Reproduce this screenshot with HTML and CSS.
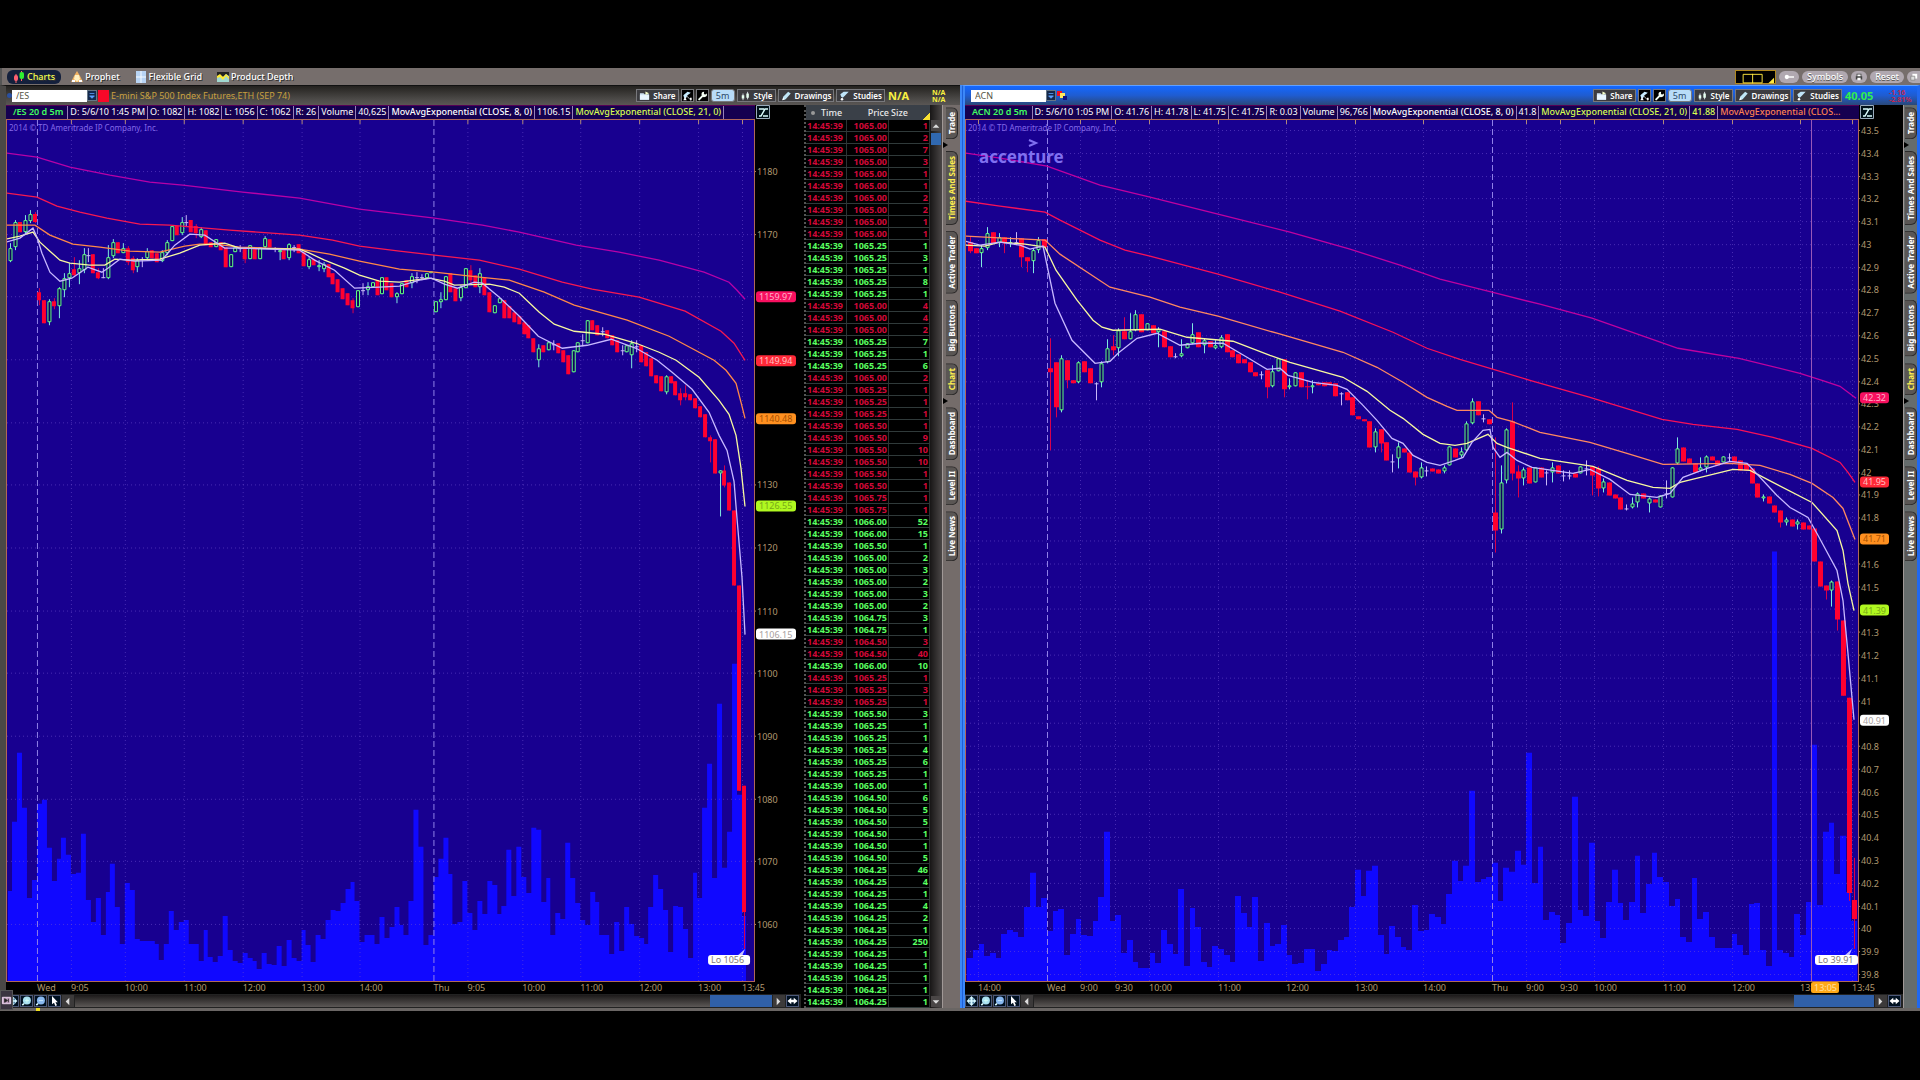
FILE: index.html
```html
<!DOCTYPE html>
<html lang="en">
<head>
<meta charset="utf-8">
<title>Charts</title>
<link rel="stylesheet" href="styles.css">
</head>
<body>
<svg class="defs" aria-hidden="true">
  <symbol id="i-share" viewBox="0 0 12 10"><path d="M1 2h4l1 1h5v6H1z" fill="#cfe4f4"/><path d="M1 4h10v5H1z" fill="#e8f6ff"/><path d="M7 0l4 2-4 2z" fill="#f4ffc8"/></symbol>
  <symbol id="i-flask" viewBox="0 0 12 12"><path d="M1 5l5-4 4 1-4 3-2 4-2-1z" fill="#c8ecff"/><path d="M1 11l2-4 2 4zM9 8h2v3H9z" fill="#fff"/><path d="M5 6l5 5" stroke="#ddd"/></symbol>
  <symbol id="i-wrench" viewBox="0 0 12 12"><path d="M2 10l5-5" stroke="#f4fff4" stroke-width="2.4" stroke-linecap="round"/><path d="M11 3a3.2 3.2 0 1 1-3-2L7.600 3 9 4.400z" fill="#f4fff4"/></symbol>
  <symbol id="i-candles" viewBox="0 0 12 12"><path d="M3 3v8M8.500 1v9" stroke="#eef"/><path d="M1.500 5h3v4h-3zM7 3h3v5H7z" fill="#e6fff0"/></symbol>
  <symbol id="i-pencil" viewBox="0 0 12 12"><path d="M1 11l1-4 6-6 3 2-6 7z" fill="#bfe6f6"/><path d="M1 11l1-3 2 2z" fill="#fff"/></symbol>
  <symbol id="i-studies" viewBox="0 0 12 12"><path d="M1 4l4-3h6L7 5 4 8 2 7z" fill="#bfe4f8"/><circle cx="3" cy="10" r="1.500" fill="#fff"/></symbol>
  <symbol id="i-fit" viewBox="0 0 14 14"><path d="M.5.5h13v13H.5z" fill="#001018" stroke="#9ab"/><path d="M3 11h2l4-7h3M3 4h5M7 11h5" stroke="#dff" stroke-width="1.500" fill="none"/></symbol>
  <symbol id="i-pan" viewBox="0 0 12 12"><circle cx="6" cy="6" r="4.500" fill="#5888a8"/><path d="M6 0l2.500 3H7v2h2V3.500L12 6 9 8.500V7H7v2h1.500L6 12 3.500 9H5V7H3v1.500L0 6l3-2.500V5h2V3H3.500z" fill="#d8f8ff"/></symbol>
  <symbol id="i-zin" viewBox="0 0 12 12"><circle cx="6.500" cy="5.500" r="4.800" fill="#a8e0f0"/><path d="M1 11l2-2" stroke="#dff" stroke-width="2"/><path d="M4 5.500h5M6.500 3v5" stroke="#d8fff4"/></symbol>
  <symbol id="i-zout" viewBox="0 0 12 12"><circle cx="6.500" cy="5.500" r="4.800" fill="#88b8f0"/><path d="M1 11l2-2" stroke="#dff" stroke-width="2"/><path d="M4 5.500h5" stroke="#d0f0ff"/></symbol>
  <symbol id="i-ptr" viewBox="0 0 12 12"><path d="M3 0v10l2.400-2L7 12l2-1-1.800-3.500H10z" fill="#fff"/></symbol>
  <symbol id="i-lr" viewBox="0 0 12 12"><path d="M0 6l4.500-4v2.500h3V2L12 6 7.500 10V7.500h-3V10z" fill="#fff"/></symbol>
  <symbol id="i-left" viewBox="0 0 12 12"><path d="M8 2v8L4 6z" fill="#ddd"/></symbol>
  <symbol id="i-right" viewBox="0 0 12 12"><path d="M4 2v8l4-4z" fill="#ddd"/></symbol>
  <symbol id="i-up" viewBox="0 0 12 12"><path d="M2 8h8L6 4z" fill="#ddd"/></symbol>
  <symbol id="i-down" viewBox="0 0 12 12"><path d="M2 4h8L6 8z" fill="#ddd"/></symbol>
  <symbol id="i-drop" viewBox="0 0 10 11"><path d="M2 3h6M2 6h6L5 9z" stroke="#5aa0ff" fill="#5aa0ff"/></symbol>
</svg>

<div class="app">
  <header class="topbar">
    <nav class="views">
      <button class="view on"><svg viewBox="0 0 12 12"><path d="M3 3v9M8.500 0v10" stroke="#f66"/><rect x="1" y="4" width="4" height="6" rx="2" fill="#ff6070"/><rect x="6.500" y="1" width="4.500" height="7" rx="2" fill="#30f030"/></svg>Charts</button>
      <button class="view"><svg viewBox="0 0 12 12"><path d="M6 0l3 5 3 6H0l3-6z" fill="#f0b060"/><path d="M4 4h4l1 4-3 3-3-3z" fill="#fff0c0"/><path d="M1 9h3v2H1zM8 9h3v2H8z" fill="#fff"/></svg>Prophet</button>
      <button class="view"><svg viewBox="0 0 12 12"><path d="M1 0h10v12H1z" fill="#b8d4f4"/><path d="M6 0v12M1 6h10" stroke="#f4faff"/></svg>Flexible Grid</button>
      <button class="view"><svg viewBox="0 0 12 12"><path d="M0 1h12v10H0z" fill="#a0d8d0"/><path d="M0 1h12v4L9 3 6 6 3 4 0 6z" fill="#222"/><path d="M0 5l3-2 3 3 3-3 3 3v2L9 5 6 9 3 6 0 7z" fill="#ffe830"/></svg>Product Depth</button>
    </nav>
    <div class="tools">
      <button class="gridbtn" aria-label="Grid layout"><svg viewBox="0 0 41 14"><path d="M7.500 3.500h20v9h-20zM17.500 3v10" stroke="#ffe840" fill="none"/><path d="M40 7v6h-6z" fill="#ffe840"/></svg></button>
      <button class="pill" aria-label="Key"><svg viewBox="0 0 14 8"><circle cx="4" cy="4" r="3" fill="#fff"/><path d="M6 4h8" stroke="#fff" stroke-width="2"/></svg></button>
      <button class="pill">Symbols</button>
      <button class="pill round" aria-label="Print"><svg viewBox="0 0 10 10"><path d="M2 1h6v3h1v4H1V4h1z" fill="#444"/><path d="M3 2h4v2H3zM3 6h4v3H3z" fill="#fff"/></svg></button>
      <button class="pill">Reset</button>
      <button class="pill last" aria-label="Copy"><svg viewBox="0 0 10 10"><path d="M3 1h6v6H3z" fill="#fff"/><path d="M1 4h5v5H1z" fill="#ddd" stroke="#888"/></svg></button>
    </div>
  </header>

  <main class="panels">
    <section class="panel">
      <div class="toolbar">
        <i class="grip"></i>
        <input class="symbol" aria-label="Symbol" value="/ES">
        <button class="drop" aria-label="Symbol list"><svg><use href="#i-drop"/></svg></button>
        <i class="link"></i>
        <span class="desc">E-mini S&amp;P 500 Index Futures,ETH (SEP 74)</span>
        <div class="acts">
          <button class="act"><svg><use href="#i-share"/></svg>Share</button>
          <button class="act sq" aria-label="Flask"><svg><use href="#i-flask"/></svg></button>
          <button class="act sq" aria-label="Settings"><svg><use href="#i-wrench"/></svg></button>
          <button class="act time">5m</button>
          <button class="act"><svg><use href="#i-candles"/></svg>Style</button>
          <button class="act"><svg><use href="#i-pencil"/></svg>Drawings</button>
          <button class="act"><svg><use href="#i-studies"/></svg>Studies</button>
        </div>
        <b class="last-price na">N/A</b>
        <b class="change na">N/A<br>N/A</b>
      </div>
      <div class="body">
        <div class="chart" id="es">
          <div class="info">
            <b class="sym">/ES 20 d 5m</b><span>D: 5/6/10 1:45 PM</span><span>O: 1082</span><span>H: 1082</span><span>L: 1056</span><span>C: 1062</span><span>R: 26</span><span>Volume</span><span>40,625</span><b>MovAvgExponential (CLOSE, 8, 0)</b><span>1106.15</span><b class="lime">MovAvgExponential (CLOSE, 21, 0)</b>
          </div>
          <button class="fit" aria-label="Fit"><svg><use href="#i-fit"/></svg></button>
          <div class="plot"><svg class="canvas"></svg><svg class="notes"></svg></div>
          <svg class="prices"></svg>
          <svg class="times"></svg>
          <div class="scroll">
            <button class="tl" aria-label="Pan"><svg><use href="#i-pan"/></svg></button>
            <button class="tl" aria-label="Zoom in"><svg><use href="#i-zin"/></svg></button>
            <button class="tl" aria-label="Zoom out"><svg><use href="#i-zout"/></svg></button>
            <button class="tl" aria-label="Pointer"><svg><use href="#i-ptr"/></svg></button>
            <button class="ar" aria-label="Scroll left"><svg><use href="#i-left"/></svg></button>
            <div class="track"><div class="thumb"></div></div>
            <button class="ar" aria-label="Scroll right"><svg><use href="#i-right"/></svg></button>
            <button class="tl" aria-label="Expand"><svg><use href="#i-lr"/></svg></button>
            <button class="flyout" aria-label="Open side panel"><svg viewBox="0 0 12 12"><path d="M1.500 2.500h9v7h-9z" fill="#c8a8c8" stroke="#f0d8f0"/><path d="M4 4v4l3-2zM8 4v4" fill="#222" stroke="#222"/></svg></button>
          </div>
        </div>
        <div class="divider"></div>
        <table class="sales">
          <thead><tr><th><i></i>Time</th><th>Price</th><th>Size</th></tr></thead>
          <tbody id="sales"></tbody>
        </table>
        <div class="vscroll">
          <button aria-label="Scroll up"><svg><use href="#i-up"/></svg></button>
          <div class="vthumb"></div>
          <button class="dn" aria-label="Scroll down"><svg><use href="#i-down"/></svg></button>
        </div>
        <nav class="rail">
          <button>Trade</button><i></i><button class="on">Times And Sales</button><button>Active Trader</button><button>Big Buttons</button><button class="on">Chart</button><i></i><button>Dashboard</button><button>Level II</button><button>Live News</button>
        </nav>
      </div>
    </section>

    <section class="panel active">
      <div class="toolbar">
        <i class="grip"></i>
        <input class="symbol" aria-label="Symbol" value="ACN">
        <button class="drop" aria-label="Symbol list"><svg><use href="#i-drop"/></svg></button>
        <svg class="links" viewBox="0 0 11 11"><path d="M0 1h5v5H0z" fill="#f01020"/><path d="M3 3h5v5H3z" fill="#ffe860"/><path d="M6 6h4v4H6z" fill="#101080"/></svg>
        <div class="acts">
          <button class="act"><svg><use href="#i-share"/></svg>Share</button>
          <button class="act sq" aria-label="Flask"><svg><use href="#i-flask"/></svg></button>
          <button class="act sq" aria-label="Settings"><svg><use href="#i-wrench"/></svg></button>
          <button class="act time">5m</button>
          <button class="act"><svg><use href="#i-candles"/></svg>Style</button>
          <button class="act"><svg><use href="#i-pencil"/></svg>Drawings</button>
          <button class="act"><svg><use href="#i-studies"/></svg>Studies</button>
        </div>
        <b class="last-price">40.05</b>
        <b class="change">-1.16<br>-2.81%</b>
      </div>
      <div class="body">
        <div class="chart" id="acn">
          <div class="info">
            <b class="sym">ACN 20 d 5m</b><span>D: 5/6/10 1:05 PM</span><span>O: 41.76</span><span>H: 41.78</span><span>L: 41.75</span><span>C: 41.75</span><span>R: 0.03</span><span>Volume</span><span>96,766</span><b>MovAvgExponential (CLOSE, 8, 0)</b><span>41.8</span><b class="lime">MovAvgExponential (CLOSE, 21, 0)</b><b class="lime">41.88</b><b class="orange">MovAvgExponential (CLOS...</b>
          </div>
          <button class="fit" aria-label="Fit"><svg><use href="#i-fit"/></svg></button>
          <div class="plot"><svg class="canvas"></svg><svg class="notes"></svg></div>
          <svg class="prices"></svg>
          <svg class="times"></svg>
          <div class="scroll">
            <button class="tl" aria-label="Pan"><svg><use href="#i-pan"/></svg></button>
            <button class="tl" aria-label="Zoom in"><svg><use href="#i-zin"/></svg></button>
            <button class="tl" aria-label="Zoom out"><svg><use href="#i-zout"/></svg></button>
            <button class="tl" aria-label="Pointer"><svg><use href="#i-ptr"/></svg></button>
            <button class="ar" aria-label="Scroll left"><svg><use href="#i-left"/></svg></button>
            <div class="track"><div class="thumb wide"></div></div>
            <button class="ar" aria-label="Scroll right"><svg><use href="#i-right"/></svg></button>
            <button class="tl" aria-label="Expand"><svg><use href="#i-lr"/></svg></button>
          </div>
        </div>
        <nav class="rail">
          <button>Trade</button><i></i><button>Times And Sales</button><button>Active Trader</button><button>Big Buttons</button><button class="on">Chart</button><i></i><button>Dashboard</button><button>Level II</button><button>Live News</button>
        </nav>
      </div>
    </section>
  </main>
  <footer class="foot"><i></i></footer>
</div>
<script src="charts.js"></script>
</body>
</html>
```
FILE: styles.css
```css
* { box-sizing: border-box; }
body {
  margin: 0;
  padding: 68px 0;
  background: #000;
  color: #fff;
  font: 9px/11px "Noto Sans", "Open Sans", sans-serif;
}
button { font: inherit; color: inherit; border: 0; margin: 0; padding: 0; background: none; }
i { font-style: normal; }
svg { display: block; }
.defs { position: absolute; width: 0; height: 0; }

.topbar { display: flex; justify-content: space-between; height: 17px; background: #766e6c; border-left: 2px solid #555; }
.views { display: flex; align-items: center; padding-left: 5px; gap: 5px; }
.view { display: flex; align-items: center; gap: 2px; height: 14px; padding: 0 5px; font-weight: 500; text-shadow: 1px 1px #333; }
.view svg { width: 12px; height: 12px; }
.view.on { background: #14203c; border-radius: 6px; color: #f4ff50; padding: 0 6px; }
.tools { display: flex; align-items: center; gap: 3px; }
.gridbtn { width: 41px; height: 14px; background: #000; border: 1px solid #b08820; }
.pill { display: flex; align-items: center; height: 12px; padding: 0 5px; border-radius: 6px; background: #b0a8b0; font-weight: 500; text-shadow: 0 1px #555; }
.pill svg { width: 10px; height: 8px; }
.pill.round { padding: 0 3px; }
.pill.last { border-radius: 6px 0 0 6px; padding: 0 1px 0 2px; }

.panels { display: grid; grid-template-columns: 1fr 1fr; }
.panel { display: flex; flex-direction: column; min-width: 0; background: #3c3a38; border-left: 6px solid #4a4846; border-top: 1px solid #111; }
.panel.active { background: #1f60d8; border: 1px solid #60a0ff; border-left: 5px double #3c88f8; border-right: 3px solid #2068f0; border-bottom: 0; }
.toolbar { display: flex; align-items: center; height: 19px; padding-left: 1px; background: linear-gradient(#24221f, #4c4a48 70%, #5a5654); }
.active .toolbar { padding-left: 1px; background: linear-gradient(#1468ff, #1f5cd0 50%, #2a4878); }
.grip { width: 5px; height: 5px; border-radius: 3px; background: #2a50a0; }
.active .grip { background: none; }
.symbol { width: 75px; height: 12px; border: 0; padding: 0 4px; background: #fff; color: #554; font: inherit; }
.drop { width: 10px; height: 11px; background: #14284c; border: 1px solid #678; }
.drop svg { width: 8px; height: 9px; }
.link { width: 11px; height: 12px; margin: 0 2px 0 1px; background: #f80828; }
.links { width: 11px; height: 11px; margin-left: 1px; }
.desc { color: #c8a040; }
.acts { display: flex; gap: 2px; margin-left: auto; }
.act { display: flex; align-items: center; gap: 3px; height: 13px; padding: 0 2px; background: #3c3c40; border: 1px solid #78787c; font-size: 8px; font-weight: 600; }
.act svg { width: 11px; height: 10px; }
.act.sq { width: 13px; background: #000; padding: 0; justify-content: center; }
.act.time { width: 24px; justify-content: center; border-radius: 3px; background: #b8dcf8; color: #2a4868; font-size: 9px; font-weight: 400; }
.last-price { width: 47px; padding-left: 3px; font-size: 11px; color: #30f050; }
.change { width: 28px; font-size: 7px; line-height: 7px; color: #c02850; }
.na { color: #f8f040; }

.body { display: flex; flex: 1; background: #000; }
.chart { flex: 1; min-width: 0; display: grid; grid-template-columns: minmax(0, 1fr) 46px; grid-template-rows: 14px minmax(0, 1fr) 12px 14px; background: #000; }
.active .chart { grid-template-columns: minmax(0, 1fr) 44px; }
.info { display: flex; background: #150050; line-height: 12px; white-space: nowrap; overflow: hidden; border-top: 1px solid #505; }
.info > * { padding: 0 2px; border-right: 1px solid #9880b8; }
.info b { font-weight: 500; }
.info .sym { padding: 0 4px 0 7px; color: #40ff60; font-weight: 600; }
.info .lime { color: #d8ff50; }
.info .orange { color: #ff8050; border: 0; }
.fit { padding-left: 1px; }
.fit svg { width: 14px; height: 14px; }
.plot { position: relative; background: #180090; border: 1px solid #b06858; }
.plot svg { position: absolute; left: 0; top: 0; width: 100%; height: 100%; }
.notes { overflow: visible; }
.notes text { fill: #8468e8; font-size: 8px; }
.notes .brand { font: 700 17px "Noto Sans", sans-serif; fill: #8070f0; }
.notes .low text { fill: #807878; font-size: 9px; }
.prices, .times { width: 100%; height: 100%; overflow: visible; }
.prices { height: calc(100% - 2px); margin: 1px 0; }
.times { width: calc(100% - 2px); margin: 0 1px; z-index: 1; }
.prices text, .times text { fill: #b09870; }
.prices .tag text { fill: inherit; }
.canvas path { fill: none; vector-effect: non-scaling-stroke; }
.canvas path.vol { fill: #1008ff; }
.canvas path.up { fill: #100060; stroke: #60ff80; }
.canvas path.down { fill: #ff0030; }
.canvas path.wd { stroke: #d8004c; }
.canvas path.wu { stroke: #80e8e0; }
.canvas path.doji { stroke: #c8b8f8; }

.scroll { position: relative; grid-column: 1 / -1; display: flex; align-items: stretch; gap: 1px; padding: 1px 2px 1px 0; background: #222; }
.scroll svg { width: 11px; height: 11px; }
.tl { width: 13px; background: #001020; border: 1px solid #4c5878; }
.tl svg { width: 11px; height: 10px; }
.ar { width: 12px; background: #3c3a3a; }
.flyout { position: absolute; left: -6px; bottom: -2px; width: 13px; height: 20px; background: #3a3440; border: 1px solid #555; }
.track { flex: 1; display: flex; justify-content: flex-end; background: linear-gradient(#1c1a1a, #5c5856); }
.thumb { width: 62px; background: #3060a8; }
.thumb.wide { width: 80px; }
.divider { width: 5px; background: #000; border-right: 2px dotted #555; border-left: 1px solid #000; }

.sales { width: 124px; border-spacing: 0; table-layout: fixed; font-weight: 700; align-self: flex-start; }
.sales th { height: 15px; padding: 0; background: #3a4048; color: #e8e8e8; font-weight: 500; line-height: 14px; }
.sales th:nth-child(1) { width: 41px; }
.sales th:nth-child(2) { width: 42px; text-align: right; }
.sales th:nth-child(3) { text-align: left; padding-left: 2px; background: linear-gradient(135deg, #3a4048 86%, #f8e030 86%); }
.sales th i { display: inline-block; width: 4px; height: 4px; margin-right: 6px; border-radius: 2px; background: #999; vertical-align: middle; }
.sales td { height: 12px; padding: 0 1px; line-height: 11px; border-bottom: 1px solid #303a3a; border-right: 1px solid #2c3434; text-align: right; }
.sales td:first-child { text-align: left; }
.sales .b { color: #58ff60; }
.sales .s { color: #d00838; }
.vscroll { display: flex; flex-direction: column; width: 12px; padding: 15px 1px 1px; background: linear-gradient(90deg, #181616, #4a4646); }
.vscroll button { width: 10px; height: 11px; background: #4a4646; }
.vscroll svg { width: 10px; height: 10px; }
.vthumb { height: 12px; margin-top: 2px; background: #3068b0; }
.vscroll .dn { margin-top: auto; }
.rail { display: flex; flex-direction: column; align-items: flex-end; gap: 6px; width: 18px; padding: 2px 2px 0 0; background: #746c6a; border-left: 1px solid #a09896; }
.active .rail { width: 14px; padding-right: 0; background: #666c6c; }
.rail button { writing-mode: vertical-rl; transform: rotate(180deg); width: 12px; padding: 4px 0; font-size: 8px; line-height: 11px; font-weight: 700; background: #5a5654; border: 1px solid #2c2a2a; border-right: 0; border-radius: 6px 0 0 6px; }
.rail .on { color: #fff050; }
.rail > i { align-self: flex-start; width: 0; height: 0; margin: -3px 0; border: 3px solid transparent; border-left: 5px solid #000; }

.foot { height: 3px; background: #6a6664; }
.foot i { display: block; width: 4px; height: 3px; margin-left: 36px; background: #f0e020; }
```
FILE: charts.js
```js
// Each candle: direction (r down, g up, w doji), body top, body bottom, then optional high and low.
const ES = {
  view: [7, 120, 748, 860], x0: 10, step: 4.9, body: 4,
  grid: { v: [71, 125, 184, 243, 302, 360, 468, 523, 581, 640, 699, 743], dash: [37, 434] },
  times: [[37, 'Wed'], [71, '9:05'], [125, '10:00'], [184, '11:00'], [243, '12:00'], [302, '13:00'], [360, '14:00'], [434, 'Thu'], [468, '9:05'], [523, '10:00'], [581, '11:00'], [640, '12:00'], [699, '13:00'], [743, '13:45']],
  price: { top: 1180, y: 171, step: 10, gap: 62.67, n: 13, digits: 0, skip: [1160, 1150, 1140] },
  tags: [[296, '1159.97', '#f81060', '#ffb0c8'], [360, '1149.94', '#ff2838', '#ffc0c0'], [418, '1140.48', '#ff9020', '#a85000'], [505, '1126.55', '#b0f820', '#78a818'], [633, '1106.15', '#fff', '#a8a0a0']],
  low: [709, 954, 42, 'Lo 1056'],
  vol: '90 159 228 173 83 101 177 181 133 100 122 143 126 107 108 147 81 59 83 46 89 117 74 37 98 91 42 40 40 40 37 21 37 70 51 59 61 37 37 20 51 24 19 25 65 31 20 18 28 23 20 12 28 17 16 35 15 41 23 20 51 36 19 46 42 61 71 70 78 92 99 80 39 46 46 37 64 43 54 74 56 46 80 171 134 36 46 104 122 143 107 57 59 100 68 51 80 67 100 96 67 75 131 85 134 104 88 153 151 79 103 46 68 62 138 103 78 61 56 89 79 46 46 27 59 30 74 57 45 43 37 74 106 92 71 29 75 74 52 23 108 83 173 217 103 277 113 149 317 186 65',
  candles: 'g 248 261 243 262|g 222 247 220 250|r 222 232|g 220 232 215 233|g 214 221 210 223|r 214 222 212 223|r 292 300 288 305|r 300 323|g 301 322 299 325|r 301 306 298 309|g 288 306 287 318|g 278 290 273 297|g 273 278 263 287|r 269 275 257 277|g 268 273 260 284|g 254 270 248 273|w 255 255 248 262|r 254 273|r 272 278 268 279|w 277 277 268 278|g 257 278 245 279|g 242 256 239 258|r 242 253|g 248 253 243 253|r 248 262 246 265|r 258 270 256 273|g 260 267 258 272|w 259 259 257 267|g 251 258 248 260|r 250 258|r 253 262|g 252 261 250 262|g 242 253 240 255|g 226 241|r 226 235|g 222 233 217 235|w 222 222 215 227|r 220 232|r 226 233 224 238|g 229 237 227 238|r 230 245|r 242 247|g 239 247|r 242 250|r 247 267|g 254 267|g 247 252|w 248 248 245 252|r 248 259 247 263|g 245 259|r 247 259|g 247 259|g 238 247 236 248|r 239 247|w 248 248 247 252|g 250 252 248 260|r 250 259|g 244 258 243 260|w 247 247 245 252|r 244 253|r 252 266|g 259 267 257 269|r 259 265|g 265 267 260 271|g 264 269 262 272|r 264 277|r 273 284|r 279 292|r 288 299|r 293 305|r 300 308 298 313|g 290 307|w 290 290 283 295|g 286 290 282 295|g 282 287|r 280 295|g 277 294|r 277 290|r 283 297|g 293 297 292 303|g 283 294|r 280 287|g 276 283 273 288|w 277 277 272 283|w 277 277 274 280|g 273 278|g 271 273|g 301 312|g 299 302 292 308|g 276 300|r 273 292|r 288 301|g 287 298 285 301|g 268 288|r 270 280 265 284|r 275 287|g 273 287 268 293|r 277 295|r 292 312|g 305 313|g 298 303|r 300 318|r 306 318|r 312 322|r 316 324|r 322 334|r 325 338|r 338 352|g 348 360 344 367|r 345 352|g 342 350|w 344 344 340 350|r 343 353|r 350 362|r 355 374|g 350 372|g 342 352|w 340 340 334 346|g 320 343|r 320 330|r 325 335|w 331 331 327 336|r 330 338|r 335 345|r 340 352|w 350 350 345 355|g 345 352|g 343 355 340 368|w 346 346 340 352|r 345 362|r 352 366|r 358 376|r 375 383|r 376 391|g 376 392 375 394|r 376 383|r 381 395|r 393 400 388 405|r 393 397 385 400|r 394 400|r 398 408|r 406 417|r 414 437|r 437 441 435 462|r 439 473|g 470 473 470 516|r 470 485 465 487|r 482 510|r 510 585|r 585 790|r 785 911 785 948',
  lines: [
    ['#b800a8', '6,153 37,157 70,167 110,175 150,182 183,185 243,192 300,198 360,209 435,218 483,225 520,232 577,245 620,252 660,260 705,272 730,282 738,290 746,299'],
    ['#f81850', '6,193 37,197 57,206 80,212 107,218 140,224 170,225 230,230 300,235 333,240 360,246 400,251 435,255 480,260 520,269 563,282 593,289 640,297 686,311 722,331 735,343 746,360'],
    ['#ff8848', '6,225 35,225 50,235 73,244 100,247 130,251 160,252 185,246 200,244 215,244 240,247 300,249 330,254 360,261 400,269 435,272 480,277 510,280 545,292 575,305 628,320 670,336 715,360 727,370 737,383 742,402 746,418'],
    ['#f8f8a0', '6,239 20,236 33,232 40,242 50,251 60,260 70,263 90,265 105,265 115,259 130,260 160,259 180,253 200,245 225,243 240,248 300,249 310,253 325,260 345,268 360,275 380,281 400,282 430,278 445,281 455,285 490,284 505,287 520,293 540,312 555,324 575,331 605,334 637,343 660,352 677,360 700,377 720,400 730,414 737,435 742,468 746,506'],
    ['#c8b8ff', '6,242 20,238 33,228 37,237 42,253 50,272 60,281 72,278 88,267 102,272 108,268 120,259 135,261 162,260 175,245 190,234 205,235 225,248 240,248 300,250 315,260 335,270 355,288 380,287 400,286 420,280 432,278 445,284 458,288 475,282 483,283 500,297 520,316 539,336 563,348 588,345 612,339 637,348 658,360 673,372 693,389 710,412 720,435 728,450 735,481 738,518 743,577 746,634']
  ]
};
const ACN = {
  view: [966, 120, 892, 860], x0: 970, step: 5.705, body: 5,
  grid: { v: [978, 1080, 1115, 1149, 1218, 1286, 1355, 1423, 1526, 1560, 1594, 1663, 1732, 1800, 1852], dash: [1047, 1492], cross: 1811 },
  times: [[978, '14:00'], [1047, 'Wed'], [1080, '9:00'], [1115, '9:30'], [1149, '10:00'], [1218, '11:00'], [1286, '12:00'], [1355, '13:00'], [1423, '14:00'], [1492, 'Thu'], [1526, '9:00'], [1560, '9:30'], [1594, '10:00'], [1663, '11:00'], [1732, '12:00'], [1800, '13:00'], [1852, '13:45']],
  price: { top: 43.5, y: 130, step: 0.1, gap: 22.78, n: 38, digits: 1, skip: [41.7, 41.4, 40.9] },
  tags: [[397, '42.32', '#f81060', '#ffb0c8'], [481, '41.95', '#ff2838', '#ffc0c0'], [538, '41.71', '#ff9020', '#a85000'], [609, '41.39', '#b0f820', '#78a818'], [719, '40.91', '#fff', '#a8a0a0']],
  low: [1815, 954, 43, 'Lo 39.91'],
  vol: '23 31 37 25 28 23 47 51 49 44 74 108 74 83 50 70 72 26 47 62 46 45 60 84 149 60 66 28 41 19 13 13 28 18 51 37 27 92 15 73 54 19 14 35 32 26 19 85 68 54 84 20 58 35 37 56 26 17 18 32 32 10 17 31 30 41 44 74 111 85 110 115 46 27 55 44 34 31 76 50 51 67 64 57 87 120 100 115 190 99 102 104 118 80 113 109 130 116 228 98 134 61 69 66 38 58 184 71 65 138 60 43 79 111 78 61 79 125 68 97 128 104 99 75 82 44 39 103 62 69 44 33 33 33 47 36 26 77 78 31 15 429 31 28 24 67 46 79 236 76 149 158 107 145 89 60',
  candles: 'r 242 251 237 253|r 248 253|g 248 253 245 267|g 233 248 227 250|r 232 243|g 237 243 233 247|r 237 243 237 253|g 242 244 237 247|w 242 242 232 245|r 238 257 238 267|r 257 261 257 272|g 250 261 248 273|g 240 250 237 253|r 239 247|r 368 372 338 450|r 362 407 362 417|g 358 410 355 412|r 360 380 360 388|r 380 383|g 362 382 361 383|r 361 372|r 368 383|w 383 383 382 400|g 363 382 361 387|g 348 362 339 363|r 346 350 335 355|g 330 348 328 356|r 331 339 317 339|g 331 339 313 339|g 314 330 310 331|r 314 332|g 323 330|r 325 333|g 329 332 327 347|r 331 347|r 346 357|w 356 356 353 358|g 353 356 339 357|g 343 348|g 334 343 323 344|r 332 347|g 340 345 338 353|r 341 347|g 345 348 340 349|g 337 347 335 348|r 334 352|r 350 357|r 354 363|r 359 363|r 362 372|r 372 376|w 374 374 371 379|r 370 387 370 398|g 371 386 365 387|g 358 371|r 359 389 359 397|g 385 387 378 389|g 372 386|r 372 387|r 386 387 380 399|g 385 387 380 393|r 383 385|r 382 386|r 382 385|r 383 396|w 393 393 392 405|r 392 400|r 397 415|r 416 419|r 419 421|r 421 447|g 431 447 428 452|r 429 443 429 452|r 442 460|w 461 461 454 472|g 446 458 442 468|r 448 452|r 452 472|r 471 477 471 485|g 467 477 462 478|w 470 470 466 476|r 468 471|r 469 473|g 467 471 465 473|g 446 465|r 448 457|g 451 455 447 457|g 423 450 421 451|g 401 423 398 424|r 401 415|w 418 418 414 422|r 419 424|r 512 530 437 552|g 482 529 465 533|g 429 480 428 483|r 421 473 402 480|r 471 478 465 497|g 469 478 467 485|r 467 483|g 467 482|r 467 477|w 472 472 470 485|g 467 472 462 482|r 465 473|w 475 475 470 481|w 475 475 470 479|r 473 477|g 466 473|w 468 468 460 475|r 466 475 466 495|r 468 488 466 496|g 481 488 478 492|r 482 495|r 494 498|r 497 509|w 508 508 504 510|g 503 507 497 508|g 493 502 492 507|r 493 498|g 498 503 497 512|r 499 502|g 495 507|w 493 493 480 498|g 467 497|g 448 463 437 464|r 447 461|r 458 463|r 463 472|g 467 470 457 471|g 456 467 455 472|r 456 460|r 460 465|g 456 462|w 457 457 453 461|r 456 462|r 460 470|r 463 470|r 468 483|r 483 497|g 496 498 494 501|r 496 503|r 505 512|r 510 522 510 527|g 519 522 517 525|r 519 526|g 521 524 519 529|r 522 529|r 525 529|r 528 561|r 561 586|r 585 590 585 599|g 581 590 580 606|r 581 619 581 630|r 620 695|r 697 892 697 900|r 899 918 857 948',
  lines: [
    ['#c000a0', '965,153 1000,158 1047,166 1100,185 1150,197 1218,214 1290,232 1350,249 1400,265 1440,279 1492,292 1540,304 1592,318 1678,348 1739,358 1800,373 1822,380 1840,386 1856,398'],
    ['#f81058', '965,201 1000,206 1045,212 1060,220 1100,240 1125,250 1150,256 1218,274 1280,292 1340,311 1393,332 1427,348 1460,359 1530,380 1590,397 1662,419 1693,424 1737,429 1773,437 1812,448 1840,462 1848,472 1855,482'],
    ['#ff8860', '965,236 1045,240 1060,254 1110,287 1150,297 1180,307 1218,316 1277,333 1343,352 1377,367 1403,382 1427,397 1447,406 1457,410 1489,410 1497,417 1512,421 1540,432 1590,442 1627,453 1663,464 1730,463 1760,465 1790,474 1812,483 1833,497 1843,508 1855,539'],
    ['#f8f8a0', '965,245 985,246 1000,242 1025,244 1045,247 1056,270 1077,300 1093,320 1102,327 1113,330 1160,329 1187,337 1233,341 1270,355 1290,362 1343,377 1367,391 1390,410 1403,418 1423,434 1440,443 1455,445 1467,443 1488,434 1497,443 1507,447 1540,458 1593,466 1627,480 1653,487 1670,488 1680,482 1733,469 1750,470 1773,482 1812,502 1837,530 1843,550 1848,583 1854,610'],
    ['#c8b8ff', '965,241 980,245 1000,242 1020,245 1030,249 1043,246 1055,303 1072,340 1095,363 1110,361 1118,353 1137,338 1157,333 1180,345 1200,343 1223,343 1247,357 1267,369 1280,368 1288,375 1313,382 1337,385 1347,389 1363,405 1377,420 1392,438 1403,443 1413,455 1427,462 1440,465 1455,460 1463,457 1472,442 1483,430 1490,429 1493,447 1500,457 1507,452 1517,460 1532,467 1573,473 1590,469 1610,479 1630,494 1657,497 1670,493 1683,477 1707,468 1730,461 1747,463 1777,495 1790,507 1808,517 1817,533 1837,570 1843,600 1848,653 1854,719']
  ]
};

function draw(id, c) {
  const root = document.getElementById(id);
  const [vx, vy, vw, vh] = c.view;
  const base = vy + vh;
  const px = x => ((x - vx) / vw * 100).toFixed(3) + '%';
  const py = y => ((y - vy) / vh * 100).toFixed(3) + '%';
  const d = { vol: '', up: '', down: '', wu: '', wd: '', doji: '' };

  c.vol.split(' ').forEach((h, i) => {
    const l = Math.round(c.x0 + (i - 0.5) * c.step), r = Math.round(c.x0 + (i + 0.5) * c.step);
    d.vol += `M${l} ${base}V${base - h}H${r}V${base}z`;
  });
  c.candles.split('|').forEach((s, i) => {
    const [k, a, b, h = a, l = b] = s.split(' ');
    const x = Math.round(c.x0 + i * c.step);
    if (k === 'w') {
      d.doji += `M${x + 0.5} ${h}V${l}M${x - 1.5} ${+a + 0.5}h4`;
    } else if (k === 'g') {
      d.wu += `M${x + 0.5} ${h}V${l}`;
      d.up += `M${x - 1} ${+a + 0.5}h3V${b - 0.5}h-3z`;
    } else {
      d.wd += `M${x + 0.5} ${h}V${l}`;
      d.down += `M${x - 2} ${a}h${c.body}V${b}h-${c.body}z`;
    }
  });

  const p = c.price, levels = [];
  for (let i = 0; i < p.n; i++) levels.push([p.top - i * p.step, Math.round(p.y + i * p.gap)]);
  let g = `<path class="vol" d="${d.vol}"/>`;
  const dots = c.grid.v.map(x => `M${x + 0.5} ${vy}V${base}`).join('') + levels.map(l => `M${vx} ${l[1] + 0.5}H${vx + vw}`).join('');
  g += `<path d="${dots}" stroke="#7050d0" stroke-opacity=".55" stroke-dasharray="1 3"/>`;
  g += `<path d="${c.grid.v.map(x => `M${x + 0.5} ${vy}v4`).join('')}" stroke="#b08878"/>`;
  g += `<path d="${c.grid.dash.map(x => `M${x + 0.5} ${vy}V${base}`).join('')}" stroke="#9080e8" stroke-dasharray="6 3"/>`;
  g += ['wd', 'down', 'wu', 'up', 'doji'].map(k => `<path class="${k}" d="${d[k]}"/>`).join('');
  g += c.lines.map(l => `<path d="M${l[1]}" stroke="${l[0]}" stroke-width="1.300"/>`).join('');
  if (c.grid.cross) g += `<path d="M${c.grid.cross}.5 ${vy}V${base}" stroke="#9858b8"/>`;
  const canvas = root.querySelector('.canvas');
  canvas.setAttribute('viewBox', c.view.join(' '));
  canvas.setAttribute('preserveAspectRatio', 'none');
  canvas.innerHTML = g;

  const L = c.low;
  let n = '<text x="2" y="11">2014 © TD Ameritrade IP Company, Inc.</text>';
  if (id === 'acn') n += '<text class="brand" x="13" y="43">accenture</text><path d="M63 20l7 3-7 3" fill="none" stroke="#8070f0" stroke-width="2"/>';
  n += `<svg class="low" x="${px(L[0])}" y="${py(L[1])}" overflow="visible"><path d="M29 1L37 -6L34 1z" fill="#c8c0ff"/><rect width="${L[2]}" height="10" rx="3" fill="#fff"/><text x="3" y="8">${L[3]}</text></svg>`;
  root.querySelector('.notes').innerHTML = n;

  let t = levels.filter(l => !p.skip.includes(+l[0].toFixed(p.digits))).map(l =>
    `<svg y="${py(l[1])}" overflow="visible"><path d="M-2 .5h3" stroke="#b08060"/><text x="2" y="4">${+l[0].toFixed(p.digits)}</text></svg>`).join('');
  t += c.tags.map(a => `<svg class="tag" y="${py(a[0])}" overflow="visible" fill="${a[3]}"><rect x="1" y="-5" width="${a[1].length > 5 ? 40 : 29}" height="11" rx="3" fill="${a[2]}"/><text x="4" y="4">${a[1]}</text></svg>`).join('');
  root.querySelector('.prices').innerHTML = t;

  let m = c.times.map(a => `<text x="${px(a[0])}" y="9">${a[1]}</text>`).join('');
  if (c.grid.cross) m += `<svg x="${px(c.grid.cross)}" overflow="visible"><rect width="28" height="11" rx="2" fill="#ffa818"/><text x="3" y="9" style="fill:#ffe0a0">13:05</text></svg>`;
  root.querySelector('.times').innerHTML = m;
}
draw('es', ES);
draw('acn', ACN);

// Prints: side (s sell, b buy), price, then the sizes at that price.
const PRINTS = 's 1065.00 1 2 7 3 1 1 2 2 1 1|b 1065.25 1 3 1 8 1|s 1065.00 4 4 2|b 1065.25 7 1 6|s 1065.00 2|s 1065.25 1 1 1|s 1065.50 1 9 10 10 1 1|s 1065.75 1 1|b 1066.00 52 15|b 1065.50 1|b 1065.00 2 3 2 3 2|b 1064.75 3 1|s 1064.50 3 40|b 1066.00 10|s 1065.25 1 3 1|b 1065.50 3|b 1065.25 1 1 4 6 1|b 1065.00 1|b 1064.50 6 5 5 1 1 5|b 1064.25 46 4 1 4 2 1 250 1 1 1 1 1';
document.getElementById('sales').innerHTML = PRINTS.split('|').map(s => {
  const [side, price, ...sizes] = s.split(' ');
  return sizes.map(z => `<tr class="${side}"><td>14:45:39</td><td>${price}</td><td>${z}</td></tr>`).join('');
}).join('');
```
